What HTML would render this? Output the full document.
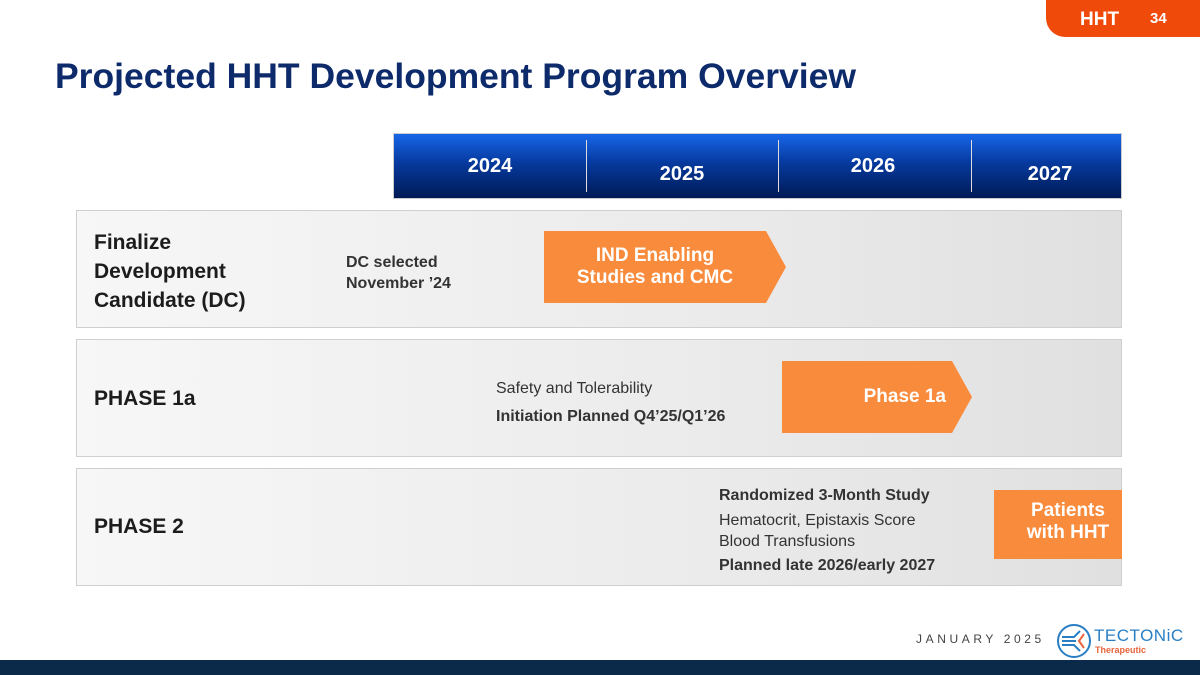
<!DOCTYPE html>
<html><head><meta charset="utf-8"><style>
*{margin:0;padding:0;box-sizing:border-box}
body{width:1200px;height:675px;position:relative;background:#fff;font-family:"Liberation Sans",sans-serif;overflow:hidden}
.a{position:absolute}
.tab{left:1046px;top:0;width:154px;height:37px;background:#f04a0a;border-radius:0 0 0 19px;color:#fff;font-weight:bold}
h1{position:absolute;left:55px;top:56px;font-size:35.5px;color:#0d2a6b;font-weight:bold;white-space:nowrap}
.bar{left:393px;top:133px;width:729px;height:66px;background:linear-gradient(#1766e8,#063a9e 45%,#001a55);border:1px solid #ccc}
.yr{color:#fff;font-weight:bold;font-size:20px;width:100px;text-align:center;margin-left:-50px}
.dv{width:1px;height:52px;top:140px;background:#ddd}
.row{left:76px;width:1046px;height:118px;border:1px solid #cfcfcf;background:linear-gradient(90deg,#f7f7f7,#ebebeb 60%,#e0e0e0)}
.lbl{font-weight:bold;color:#1c1c1c;font-size:21px;line-height:29px}
.t{color:#333;font-size:16px;line-height:21px}
.b{font-weight:bold}
.or{background:#f98b3d;color:#fff;font-weight:bold;text-align:center}
</style></head><body>
<div class="a tab"><span class="a" style="left:34px;top:9px;font-size:19px">HHT</span><span class="a" style="left:104px;top:10px;font-size:15px">34</span></div>
<h1>Projected HHT Development Program Overview</h1>
<div class="a bar"></div>
<div class="a dv" style="left:586px"></div><div class="a dv" style="left:778px"></div><div class="a dv" style="left:971px"></div>
<div class="a yr" style="left:490px;top:155px">2024</div>
<div class="a yr" style="left:682px;top:163px">2025</div>
<div class="a yr" style="left:873px;top:155px">2026</div>
<div class="a yr" style="left:1050px;top:163px">2027</div>

<div class="a row" style="top:210px"></div>
<div class="a lbl" style="left:94px;top:228px">Finalize<br>Development<br>Candidate (DC)</div>
<div class="a t b" style="left:346px;top:252px">DC selected<br>November ’24</div>
<svg class="a" style="left:544px;top:231px" width="242" height="72"><polygon points="0,0 222,0 242,36 222,72 0,72" fill="#f98b3d"/></svg>
<div class="a" style="left:544px;top:245px;width:222px;text-align:center;color:#fff;font-weight:bold;font-size:19px;line-height:22px">IND Enabling<br>Studies and CMC</div>

<div class="a row" style="top:339px"></div>
<div class="a lbl" style="left:94px;top:384px">PHASE 1a</div>
<div class="a t" style="left:496px;top:378px">Safety and Tolerability</div>
<div class="a t b" style="left:496px;top:406px">Initiation Planned Q4’25/Q1’26</div>
<svg class="a" style="left:782px;top:361px" width="190" height="72"><polygon points="0,0 170,0 190,36 170,72 0,72" fill="#f98b3d"/></svg>
<div class="a" style="left:782px;top:386px;width:170px;text-align:right;padding-right:6px;color:#fff;font-weight:bold;font-size:19px">Phase 1a</div>

<div class="a row" style="top:468px"></div>
<div class="a lbl" style="left:94px;top:512px">PHASE 2</div>
<div class="a t b" style="left:719px;top:485px">Randomized 3-Month Study</div>
<div class="a t" style="left:719px;top:510px">Hematocrit, Epistaxis Score<br>Blood Transfusions</div>
<div class="a t b" style="left:719px;top:555px">Planned late 2026/early 2027</div>
<div class="a or" style="left:994px;top:490px;width:128px;height:69px;font-size:19px;line-height:22px;padding:10px 0 0 20px">Patients<br>with HHT</div>

<div class="a" style="left:916px;top:632px;font-size:12px;letter-spacing:3.6px;color:#444;white-space:nowrap">JANUARY 2025</div>
<svg class="a" style="left:1056px;top:623px" width="36" height="36" viewBox="0 0 36 36"><circle cx="18" cy="18" r="16" fill="none" stroke="#2a7fc4" stroke-width="2"/><path d="M6 14h12l6-6M6 18h14M6 22h12l6 6" stroke="#2a7fc4" stroke-width="2" fill="none"/><path d="M28 11l-5 7 5 7" stroke="#e8643a" stroke-width="2" fill="none"/></svg>
<div class="a" style="left:1094px;top:626px;font-size:17px;color:#2a7fc4;letter-spacing:0.5px;white-space:nowrap">TECTONiC</div>
<div class="a" style="left:1095px;top:645px;font-size:9px;color:#e8643a;font-weight:bold">Therapeutic</div>
<div class="a" style="left:0;top:660px;width:1200px;height:15px;background:#0b2a4a"></div>
</body></html>
